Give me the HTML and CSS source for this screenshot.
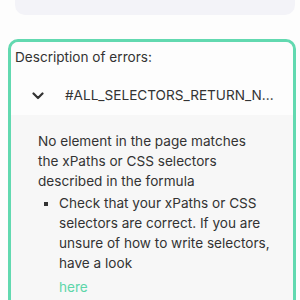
FILE: index.html
```html
<!DOCTYPE html>
<html>
<head>
<meta charset="utf-8">
<link rel="stylesheet" href="styles.css">
</head>
<body>
<div class="top-card"></div>
<section class="errors">
  <div class="errors-title">Description of errors:</div>
  <div class="acc-head">
    <svg class="chev" width="12" height="8" viewBox="0 0 12 8"><path d="M1.5 1.5 L6 6 L10.5 1.5" fill="none" stroke="#333" stroke-width="2.2" stroke-linecap="round" stroke-linejoin="round"/></svg>
    <span class="acc-title">#ALL_SELECTORS_RETURN_N...</span>
  </div>
  <div class="acc-body">
    <p class="msg">No element in the page matches the xPaths or CSS selectors described in the formula</p>
    <ul class="tips">
      <li>Check that your xPaths or CSS selectors are correct. If you are unsure of how to write selectors, have a look <a class="link" href="#">here</a></li>
    </ul>
  </div>
</section>
</body>
</html>
```
FILE: styles.css
```css
html, body { margin: 0; padding: 0; }
body {
  background: #fdfdfd;
  font-family: Inter, "Liberation Sans", Arial, sans-serif;
  color: #333;
  font-size: 13.6px;
  width: 300px;
  height: 300px;
  overflow: hidden;
}
.top-card {
  height: 15px;
  margin: 0 5px 0 15px;
  background: #f3f3f8;
  border-radius: 0 0 10px 10px;
}
.errors {
  margin: 24px 4px 0 8px;
  border: 3px solid #62d9b0;
  border-radius: 10px;
  background: #f7f7f7;
  height: 300px;
}
.errors-title {
  background: #fdfdfd;
  border-radius: 8px 8px 0 0;
  padding: 5px 4px 0 4px;
  line-height: 20px;
  height: 28px;
}
.acc-head {
  display: flex;
  align-items: center;
  background: #fdfdfd;
  height: 40px;
  padding-left: 21px;
}
.chev { flex: none; margin-top: 2px; }
.acc-title {
  margin-left: 21px;
  white-space: nowrap;
}
.acc-body {
  padding: 16px 21px 0 27px;
}
.msg {
  margin: 0 12px 0 0;
  line-height: 20px;
}
.tips {
  margin: 2px 0 0 0;
  padding-left: 21px;
  list-style: square;
  line-height: 20px;
}
.link {
  display: block;
  margin-top: 4px;
  color: #5dd6a9;
  text-decoration: none;
}
```
